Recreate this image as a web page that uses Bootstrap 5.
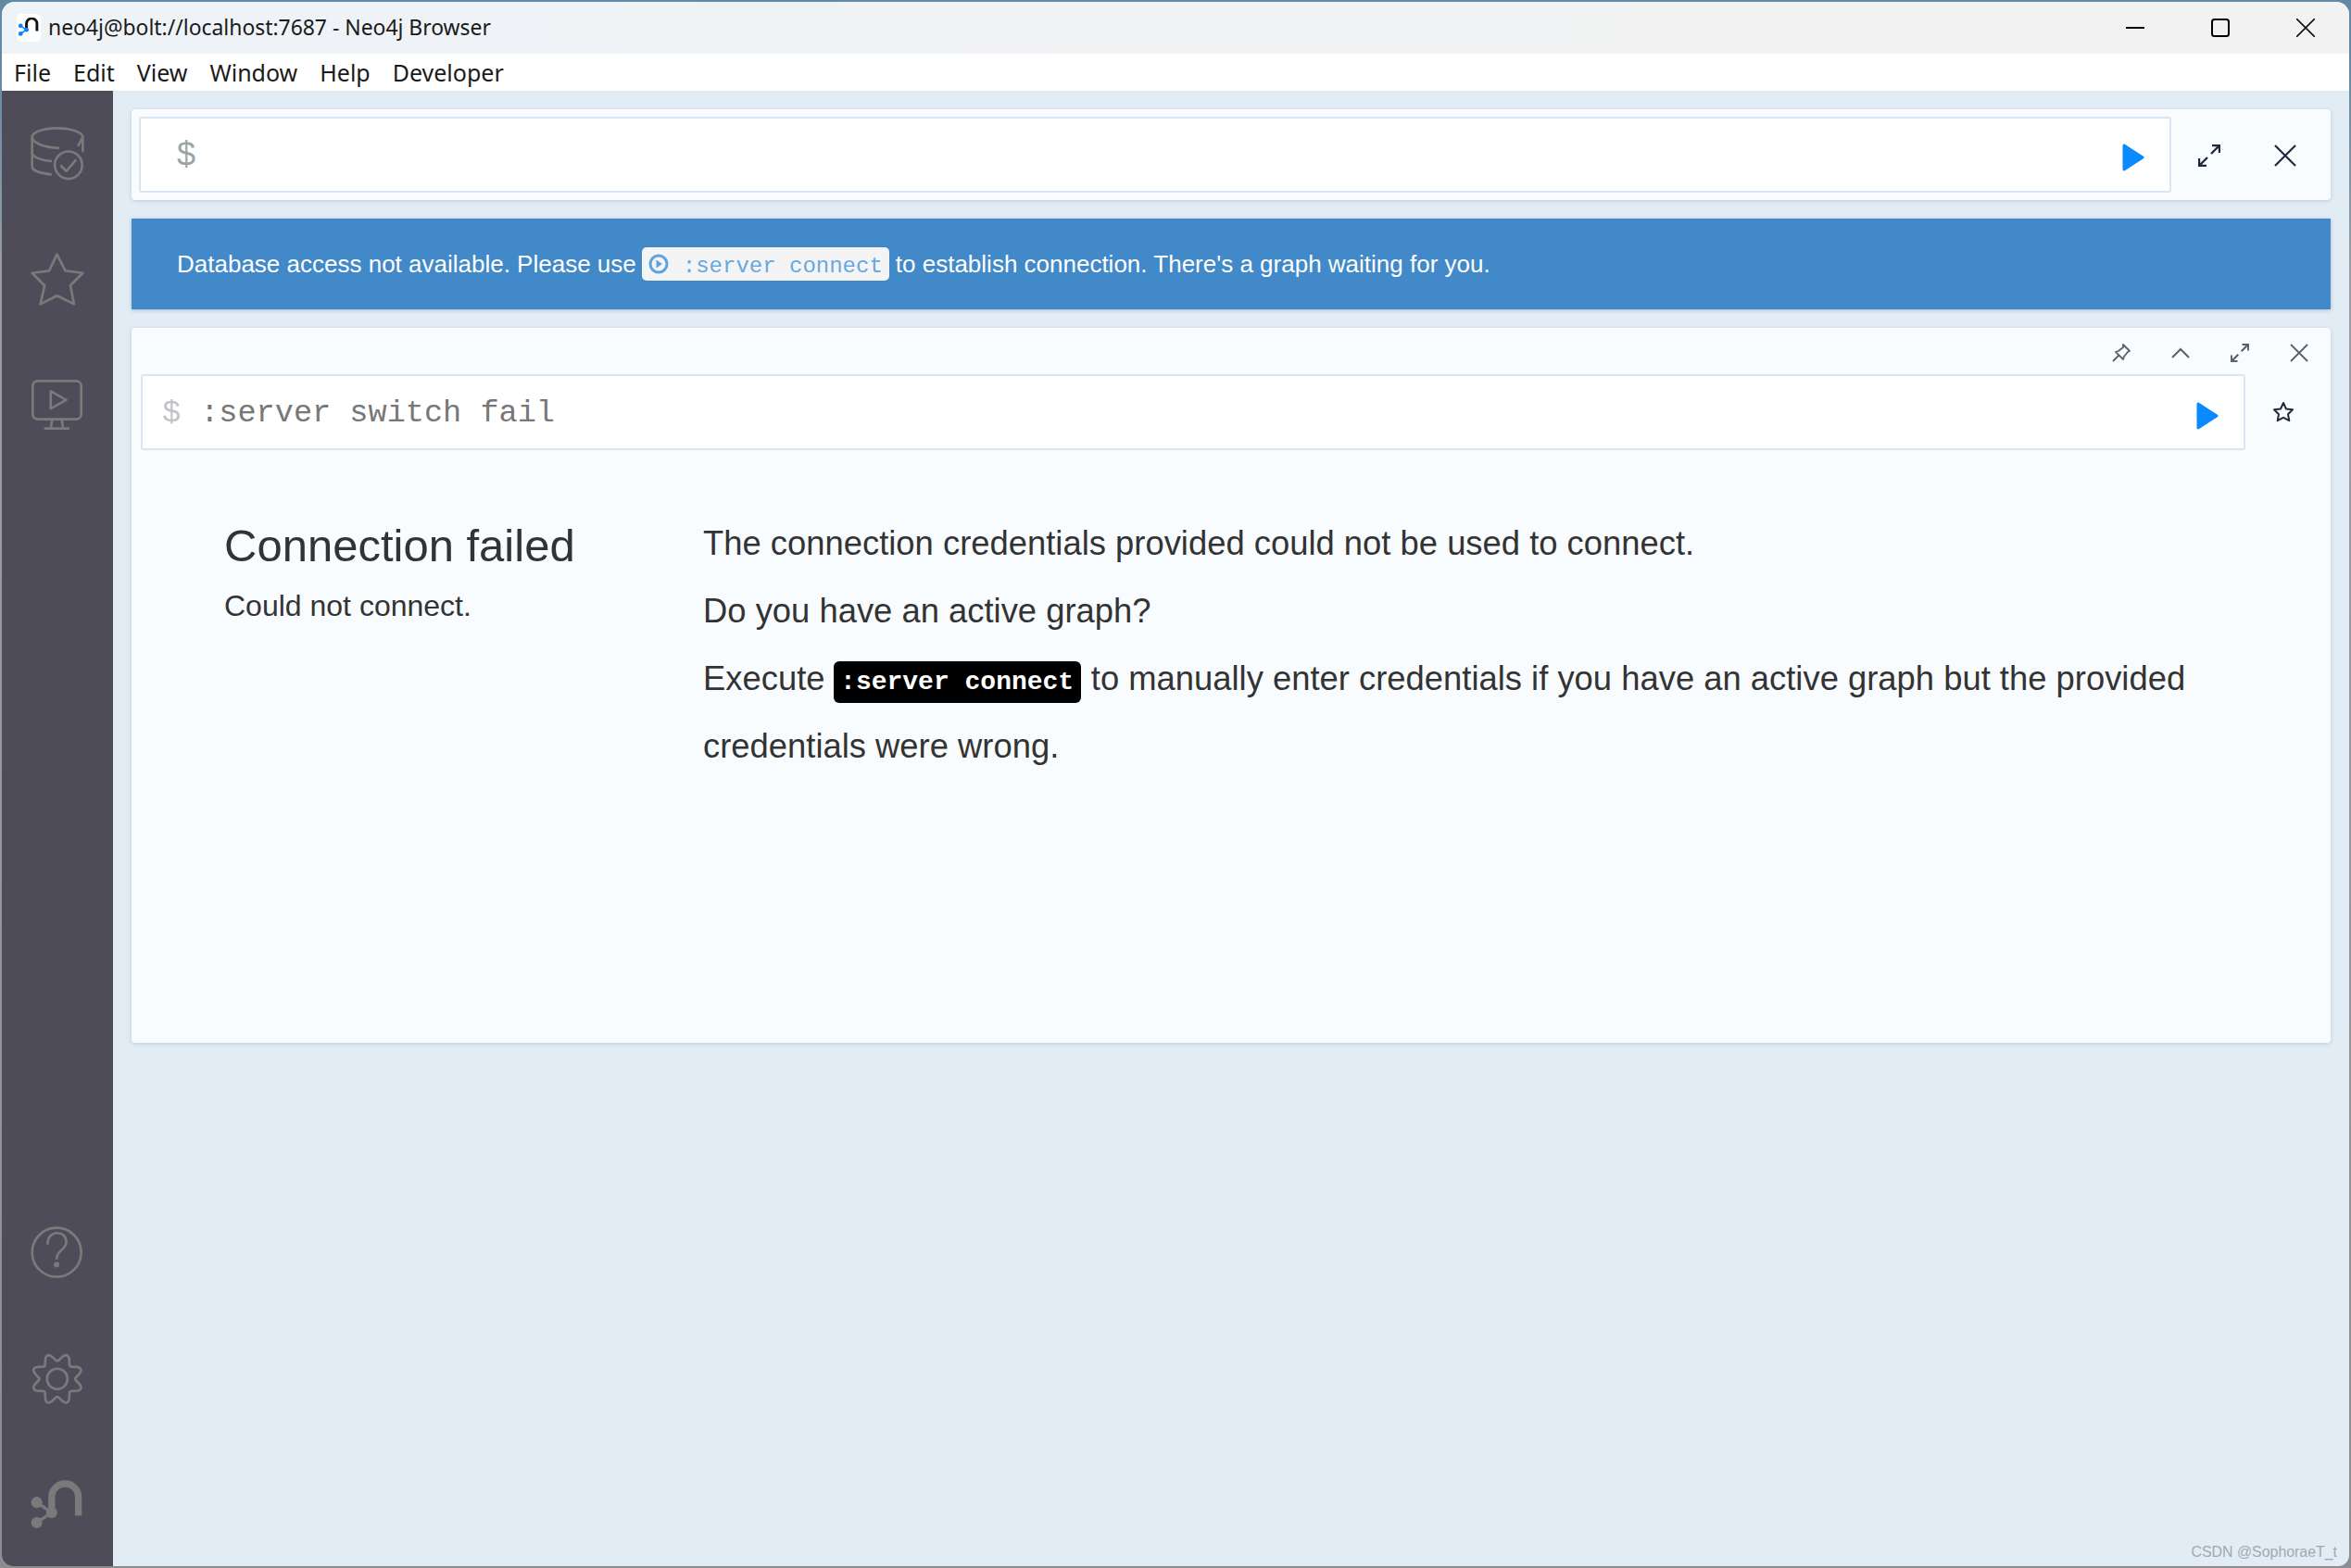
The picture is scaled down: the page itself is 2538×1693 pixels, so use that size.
<!DOCTYPE html>
<html lang="en">
<head>
  <meta charset="UTF-8">
  <meta name="viewport" content="width=device-width, initial-scale=1.0">
  <title>Neo4j Browser</title>
  <link href="https://cdn.jsdelivr.net/npm/bootstrap@5.3.0/dist/css/bootstrap.min.css" rel="stylesheet">
  <style>
    html, body { height: 100%; }
    body {
      background: linear-gradient(#6288a4 0, #6288a4 60px, #9a9ea3 300px, #8b8d90 100%);
      padding: 2px;
      font-family: "Liberation Sans", Arial, sans-serif;
      color: #333;
      overflow: hidden;
    }
    .app-window {
      height: 100%;
      border-radius: 14px 14px 12px 12px;
      overflow: hidden;
      background: #e2ecf5;
      position: relative;
    }
    .title-bar {
      height: 56px;
      background: linear-gradient(90deg, #eef3f8, #f2f2f2 80%);
      font-family: "Noto Sans", sans-serif;
      font-size: 22.9px;
      color: #1a1a1a;
      padding-left: 16px;
    }
    .title-text { padding-top: 1px; margin-left: 1px; }
    .title-logo { width: 26px; height: 30px; background: #fff; border-radius: 5px; margin-right: 7px; }
    .win-btn { width: 92px; height: 56px; }
    .win-btns { padding-right: 1px; }
    .menu-bar {
      height: 40px;
      background: #fff;
      font-family: "Noto Sans", sans-serif;
      font-size: 25px;
      color: #1a1a1a;
      padding: 2px 0 0 13px;
      gap: 24px;
    }
    .side-bar { width: 120px; background: #4e4c58; }
    .side-bottom { margin-bottom: -2px; }
    .side-cell { height: 136px; }
    .side-cell svg { width: 56px; height: 56px; overflow: visible; fill: none; stroke: #7a7a7a; stroke-width: 8; stroke-linecap: round; stroke-linejoin: round; }
    .main-area { padding: 20px 20px 0; gap: 20px; min-width: 0; }
    .panel-box {
      background: #f9fcff;
      border: 0;
      border-radius: 4px;
      box-shadow: 0 1px 4px rgba(60, 80, 110, .22);
    }
    .top-panel { height: 98px; padding: 8px; }
    .cmd-input {
      background: #fff;
      border: 2px solid #d9e5f1;
      border-radius: 3px;
      height: 82px;
      min-width: 0;
    }
    .top-dollar { font-size: 36px; color: #9aa5a8; padding-left: 39px; }
    .play-top { margin-right: 27px; margin-top: 5px; }
    .play-frame { margin-right: 27px; margin-top: 7px; }
    .icon-cell { width: 82px; height: 82px; padding-top: 2px; }
    .notice-bar {
      background: #4189c9;
      color: #fff;
      height: 98px;
      font-size: 26px;
      padding-left: 49px;
      box-shadow: 0 1px 4px rgba(60, 80, 110, .3);
    }
    .cmd-pill {
      background: #f4f4f4;
      color: #68a8e0;
      border-radius: 5px;
      font-family: "Liberation Mono", monospace;
      font-size: 24px;
      height: 36px;
      padding: 0 7px;
      margin: 0 7px 0 6px;
    }
    .cmd-pill svg { margin-right: 15px; }
    .pill-text { padding-top: 5px; }
    .frame-panel { height: 772px; }
    .frame-tools { height: 50px; padding-right: 2px; padding-top: 3px; }
    .tool-cell { width: 64px; height: 47px; }
    .frame-cmd-row { padding: 0 10px; }
    .frame-dollar, .frame-text { padding-left: 21px; padding-top: 3px; font-family: "Liberation Mono", monospace; font-size: 33.6px; }
    .frame-dollar { color: #c0c4c8; }
    .frame-text { color: #777; }
    .star-cell { width: 82px; height: 82px; }
    .frame-body { padding: 64px 0 0 100px; }
    .status-col { width: 517px; flex: none; }
    .status-title { font-size: 49px; font-weight: 400; line-height: 60px; margin: 9px 0 0; }
    .status-sub { font-size: 32px; line-height: 46px; margin: 12px 0 0; }
    .detail-col { font-size: 36.4px; line-height: 73px; }
    .detail-col p { margin: 0; }
    .dark-code {
      background: #000;
      color: #fff;
      font-family: "Liberation Mono", monospace;
      font-weight: 700;
      font-size: 28px;
      line-height: 1;
      vertical-align: 1px;
      border-radius: 6px;
      padding: 7px 7.5px;
      margin: 0 1px 0 -1px;
    }
    .water-mark {
      position: absolute;
      right: 13px;
      bottom: 3px;
      font-size: 15.9px;
      color: #a4a8ac;
    }
  </style>
</head>
<body>
  <div class="app-window d-flex flex-column">
    <!-- title bar -->
    <div class="title-bar d-flex align-items-center flex-shrink-0">
      <div class="title-logo d-flex align-items-center justify-content-center">
        <svg width="22" height="22" viewBox="103 900 167 167">
          <path d="M168 985V950a43 43 0 0 1 86 0v60" fill="none" stroke="#111" stroke-width="22"/>
          <path d="M120 967l48 33-48 32" fill="none" stroke="#0a84ff" stroke-width="12"/>
          <circle cx="120" cy="967" r="18" fill="#0a84ff"/><circle cx="120" cy="1032" r="18" fill="#0a84ff"/><circle cx="168" cy="1000" r="18" fill="#0a84ff"/>
        </svg>
      </div>
      <span class="title-text">neo4j@bolt://localhost:7687 - Neo4j Browser</span>
      <div class="win-btns d-flex ms-auto">
        <div class="win-btn d-flex align-items-center justify-content-center">
          <svg width="20" height="20" viewBox="0 0 20 20"><path d="M0 10h20" stroke="#000" stroke-width="2"/></svg>
        </div>
        <div class="win-btn d-flex align-items-center justify-content-center">
          <svg width="20" height="20" viewBox="0 0 20 20"><rect x="1" y="1" width="18" height="18" rx="2.5" fill="none" stroke="#000" stroke-width="2"/></svg>
        </div>
        <div class="win-btn d-flex align-items-center justify-content-center">
          <svg width="20" height="20" viewBox="0 0 20 20"><path d="M0 0l20 20M20 0L0 20" stroke="#111" stroke-width="1.6"/></svg>
        </div>
      </div>
    </div>

    <!-- menu bar -->
    <div class="menu-bar d-flex align-items-center flex-shrink-0">
      <span>File</span><span>Edit</span><span>View</span><span>Window</span><span>Help</span><span>Developer</span>
    </div>

    <div class="d-flex flex-grow-1" style="min-height:0">
      <!-- sidebar -->
      <div class="side-bar d-flex flex-column justify-content-between flex-shrink-0">
        <div>
          <div class="side-cell d-flex align-items-center justify-content-center">
            <svg viewBox="103 115 167 167">
              <path d="M165 265c-35-4-60-13-60-25V145c0-16 36-29 80-29 44 0 83 13 83 29v45"/>
              <path d="M105 145c0 18 38 33 85 35M105 195c0 13 25 24 60 27M268 145l-14 26"/>
              <circle cx="222" cy="235" r="44"/>
              <path d="M199 238l16 17 30-35"/>
            </svg>
          </div>
          <div class="side-cell d-flex align-items-center justify-content-center">
            <svg viewBox="103 523 167 167">
              <path d="M185 525l27 53 56 7-40 40 12 60-55-27-53 27 13-60-40-40 55-7z"/>
            </svg>
          </div>
          <div class="side-cell d-flex align-items-center justify-content-center">
            <svg viewBox="103 933 167 167">
              <rect x="107" y="937" width="156" height="123" rx="16"/>
              <path d="M165 970l50 28-50 28zM170 1060l-5 30M200 1060l5 30M147 1090h75"/>
            </svg>
          </div>
        </div>
        <div class="side-bottom">
          <div class="side-cell d-flex align-items-center justify-content-center">
            <svg viewBox="103 77 167 167">
              <circle cx="184" cy="158" r="79"/>
              <path d="M155 130c0-45 60-45 60-5 0 25-31 25-31 53"/>
              <circle cx="184" cy="198" r="5"/>
            </svg>
          </div>
          <div class="side-cell d-flex align-items-center justify-content-center">
            <svg viewBox="-83 -83 167 167">
              <path id="gearPath" d=""/>
              <circle cx="0" cy="0" r="33"/>
            </svg>
          </div>
          <div class="side-cell d-flex align-items-center justify-content-center">
            <svg viewBox="103 892 167 167">
              <path d="M168 985V950a43 43 0 0 1 86 0v60" stroke-width="22" stroke-linecap="butt"/>
              <path d="M120 967l48 33-48 32" stroke-width="10"/>
              <circle cx="120" cy="967" r="14" fill="#7a7a7a"/><circle cx="120" cy="1032" r="14" fill="#7a7a7a"/><circle cx="168" cy="1000" r="14" fill="#7a7a7a"/>
            </svg>
          </div>
        </div>
      </div>

      <!-- main -->
      <div class="main-area d-flex flex-column flex-grow-1">
        <div class="panel-box top-panel d-flex flex-shrink-0">
          <div class="cmd-input d-flex align-items-center justify-content-between flex-grow-1">
            <span class="top-dollar">$</span>
            <svg class="play-top" width="24" height="30" viewBox="0 0 24 30"><path d="M2 2l20 13L2 28z" fill="#0a8aff" stroke="#0a8aff" stroke-width="3" stroke-linejoin="round"/></svg>
          </div>
          <div class="icon-cell d-flex align-items-center justify-content-center">
            <svg width="24" height="24" viewBox="0 0 24 24" fill="none" stroke="#1d2b3a" stroke-width="2.4"><path d="M14 10l9-9M15 1h8v8M10 14l-9 9M9 23H1v-8"/></svg>
          </div>
          <div class="icon-cell d-flex align-items-center justify-content-center">
            <svg width="24" height="24" viewBox="0 0 24 24" fill="none" stroke="#1d2b3a" stroke-width="2.2"><path d="M1 1l22 22M23 1L1 23"/></svg>
          </div>
        </div>

        <div class="notice-bar d-flex align-items-center flex-shrink-0">
          Database access not available. Please use
          <span class="cmd-pill d-inline-flex align-items-center">
            <svg width="22" height="22" viewBox="0 0 22 22"><circle cx="11" cy="11" r="9" fill="none" stroke="#5fa3dd" stroke-width="3"/><path d="M8.5 6.5l6.5 4.5-6.5 4.5z" fill="#5fa3dd"/></svg>
            <span class="pill-text">:server connect</span>
          </span>
          to establish connection. There's a graph waiting for you.
        </div>

        <div class="panel-box frame-panel flex-shrink-0">
          <div class="frame-tools d-flex justify-content-end align-items-center">
            <div class="tool-cell d-flex align-items-center justify-content-center">
              <svg width="20" height="20" viewBox="0 0 20 20" fill="none" stroke="#56616e" stroke-width="1.8" stroke-linejoin="round"><path d="M1 19l6-6M12 1l7 7-2 1-4 5-1 3-8-8 3-1 5-4z"/></svg>
            </div>
            <div class="tool-cell d-flex align-items-center justify-content-center">
              <svg width="20" height="12" viewBox="0 0 20 12" fill="none" stroke="#56616e" stroke-width="2"><path d="M1 11l9-9 9 9"/></svg>
            </div>
            <div class="tool-cell d-flex align-items-center justify-content-center">
              <svg width="20" height="20" viewBox="0 0 24 24" fill="none" stroke="#56616e" stroke-width="2.6"><path d="M14 10l9-9M15 1h8v8M10 14l-9 9M9 23H1v-8"/></svg>
            </div>
            <div class="tool-cell d-flex align-items-center justify-content-center">
              <svg width="20" height="20" viewBox="0 0 20 20" fill="none" stroke="#56616e" stroke-width="1.8"><path d="M1 1l18 18M19 1L1 19"/></svg>
            </div>
          </div>
          <div class="frame-cmd-row d-flex">
            <div class="cmd-input d-flex align-items-center flex-grow-1">
              <span class="frame-dollar">$</span>
              <span class="frame-text">:server switch fail</span>
              <svg class="play-frame ms-auto" width="24" height="30" viewBox="0 0 24 30"><path d="M2 2l20 13L2 28z" fill="#0a8aff" stroke="#0a8aff" stroke-width="3" stroke-linejoin="round"/></svg>
            </div>
            <div class="star-cell d-flex align-items-center justify-content-center">
              <svg width="24" height="24" viewBox="0 0 24 24" fill="none" stroke="#1d2b3a" stroke-width="2" stroke-linejoin="round"><path d="M12 2l3 6.5 7 .8-5 4.9 1.3 7-6.3-3.4-6.3 3.4L7 14.2 2 9.3l7-.8z"/></svg>
            </div>
          </div>
          <div class="frame-body d-flex">
            <div class="status-col">
              <h3 class="status-title">Connection failed</h3>
              <p class="status-sub">Could not connect.</p>
            </div>
            <div class="detail-col flex-grow-1">
              <p>The connection credentials provided could not be used to connect.</p>
              <p>Do you have an active graph?</p>
              <p>Execute <span class="dark-code">:server connect</span> to manually enter credentials if you have an active graph but the provided credentials were wrong.</p>
            </div>
          </div>
        </div>
      </div>
    </div>
    <div class="water-mark">CSDN @SophoraeT_t</div>
  </div>

  <script>
    // wavy outline of the settings gear
    var pts = [];
    for (var i = 0; i < 160; i++) {
      var a = i / 160 * Math.PI * 2;
      var r = 70 + 12 * Math.cos(8 * a + Math.PI);
      pts.push((r * Math.cos(a)).toFixed(1) + ' ' + (r * Math.sin(a)).toFixed(1));
    }
    document.getElementById('gearPath').setAttribute('d', 'M' + pts.join('L') + 'z');
  </script>
  <script src="https://cdn.jsdelivr.net/npm/bootstrap@5.3.0/dist/js/bootstrap.bundle.min.js"></script>
</body>
</html>
